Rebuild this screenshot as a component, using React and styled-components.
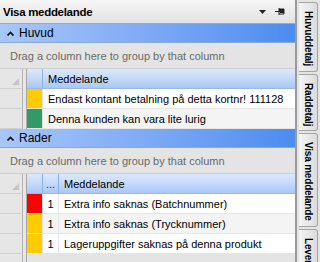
import React from 'react';
import styled, { createGlobalStyle } from 'styled-components';

const GlobalStyle = createGlobalStyle`
  html, body { margin: 0; padding: 0; background: #e4e4e4; }
  body { font-family: "Liberation Sans", Arial, sans-serif; }
`;

const huvudRows = [
  { color: '#ffcc00', text: 'Endast kontant betalning på detta kortnr! 111128' },
  { color: '#339966', text: 'Denna kunden kan vara lite lurig' },
];

const raderRows = [
  { color: '#ff0000', n: '1', text: 'Extra info saknas (Batchnummer)' },
  { color: '#ffcc00', n: '1', text: 'Extra info saknas (Trycknummer)' },
  { color: '#ffcc00', n: '1', text: 'Lageruppgifter saknas på denna produkt' },
];

const tabs = [
  { label: 'Huvuddetalj', h: 70 },
  { label: 'Raddetalj', h: 57 },
  { label: 'Visa meddelande', h: 94 },
  { label: 'Leverans', h: 80 },
];

const App = () => (
  <Shell>
    <GlobalStyle />
    <Panel>
      <TitleBar>
        <Title>Visa meddelande</Title>
        <TitleIcons>
          <svg width="7" height="4" viewBox="0 0 7 4"><path d="M0 0h7L3.5 4z" fill="#222" /></svg>
          <svg width="11" height="9" viewBox="0 0 11 9">
            <path d="M0 4.5h4M4 1v7M4 2h5v5H4M5 5.5h4" stroke="#222" strokeWidth="1" fill="none" />
            <rect x="4" y="2" width="5" height="3" fill="#222" />
          </svg>
        </TitleIcons>
      </TitleBar>

      <Band>
        <Chevron viewBox="0 0 7 5"><path d="M0.5 4.5L3.5 1.5L6.5 4.5" stroke="#111" strokeWidth="1.6" fill="none" /></Chevron>
        Huvud
      </Band>
      <DropArea>Drag a column here to group by that column</DropArea>
      <Row $header>
        <Indicator $header><Corner /></Indicator>
        <Gap />
        <ColorCell $header />
        <HeadCell>Meddelande</HeadCell>
      </Row>
      {huvudRows.map((r, i) => (
        <Row key={i} $alt={i % 2 === 1}>
          <Indicator />
          <Gap />
          <ColorCell style={{ background: r.color }} />
          <TextCell>{r.text}</TextCell>
        </Row>
      ))}

      <Band>
        <Chevron viewBox="0 0 7 5"><path d="M0.5 4.5L3.5 1.5L6.5 4.5" stroke="#111" strokeWidth="1.6" fill="none" /></Chevron>
        Rader
      </Band>
      <DropArea>Drag a column here to group by that column</DropArea>
      <Row $header>
        <Indicator $header><Corner /></Indicator>
        <Gap />
        <ColorCell $header />
        <NumCell $header>...</NumCell>
        <HeadCell>Meddelande</HeadCell>
      </Row>
      {raderRows.map((r, i) => (
        <Row key={i} $alt={i % 2 === 1}>
          <Indicator />
          <Gap />
          <ColorCell style={{ background: r.color }} />
          <NumCell>{r.n}</NumCell>
          <TextCell>{r.text}</TextCell>
        </Row>
      ))}
      <Filler>
        <Indicator $fill />
        <Gap />
      </Filler>
    </Panel>

    <TabStrip>
      {tabs.map((t) => (
        <Tab key={t.label} $h={t.h}>{t.label}</Tab>
      ))}
    </TabStrip>
  </Shell>
);

export default App;

const Shell = styled.div`
  width: 320px;
  height: 262px;
  display: flex;
  overflow: hidden;
  background: #e4e4e4;
`;

const Panel = styled.div`
  width: 295px;
  display: flex;
  flex-direction: column;
  border-right: 2px solid #9a9a9a;
  overflow: hidden;
`;

const TitleBar = styled.div`
  height: 23px;
  flex: none;
  display: flex;
  align-items: center;
  justify-content: space-between;
  padding: 0 9px 0 3px;
  background: linear-gradient(#f6f6f6, #e2e2e2);
  border-bottom: 1px solid #a8a8a8;
`;

const Title = styled.span`
  font-weight: bold;
  font-size: 11.5px;
  letter-spacing: -0.3px;
  color: #000;
`;

const TitleIcons = styled.div`
  display: flex;
  align-items: center;
  gap: 9px;
`;

const Band = styled.div`
  height: 18px;
  flex: none;
  display: flex;
  align-items: center;
  gap: 5px;
  padding-left: 7px;
  font-size: 12px;
  color: #000;
  background: linear-gradient(to right, #a7c7f7, #7eaaf5 50%, #4b8cf0);
  border-bottom: 1px solid #8aa8d8;
`;

const Chevron = styled.svg`
  width: 7px;
  height: 5px;
`;

const DropArea = styled.div`
  height: 25px;
  flex: none;
  display: flex;
  align-items: center;
  padding-left: 10px;
  font-size: 11px;
  color: #6a6a6a;
  background: #e4e4e4;
  border-bottom: 1px solid #cfcfcf;
`;

const Row = styled.div`
  height: 20px;
  flex: none;
  display: flex;
  align-items: stretch;
  background: ${(p) => (p.$header ? 'linear-gradient(#dbe8fc, #c5dafa 50%, #a9c7f6)' : p.$alt ? '#f4f4f4' : '#ffffff')};
  border-bottom: 1px solid ${(p) => (p.$header ? '#9cb8e4' : '#e6e6e6')};
  box-sizing: border-box;
`;

const Indicator = styled.div`
  position: relative;
  width: 22px;
  flex: none;
  background: #e6e6e6;
  border-right: 1px solid #b4b4b4;
  border-bottom: ${(p) => (p.$fill ? 'none' : '1px solid #d0d0d0')};
  margin-bottom: -1px;
`;

const Corner = styled.span`
  position: absolute;
  right: 3px;
  bottom: 3px;
  width: 0;
  height: 0;
  border-left: 7px solid transparent;
  border-bottom: 7px solid #c4c4c4;
`;

const Gap = styled.div`
  width: 3px;
  flex: none;
  background: #e6e6e6;
  border-right: 1px solid #a8a8a8;
  margin-bottom: -1px;
`;

const ColorCell = styled.div`
  width: 15px;
  flex: none;
  background: ${(p) => (p.$header ? 'transparent' : '#fff')};
  border-right: 1px solid ${(p) => (p.$header ? '#8fb0e0' : '#e0e0e0')};
`;

const NumCell = styled.div`
  width: 15px;
  flex: none;
  display: flex;
  align-items: center;
  justify-content: center;
  font-size: 11px;
  color: ${(p) => (p.$header ? '#333' : '#000')};
  border-right: 1px solid ${(p) => (p.$header ? '#8fb0e0' : '#e6e6e6')};
`;

const HeadCell = styled.div`
  flex: 1;
  display: flex;
  align-items: center;
  padding-left: 5px;
  font-size: 11px;
  white-space: nowrap;
  color: #000;
`;

const TextCell = styled(HeadCell)`
  padding-left: 5px;
`;

const Filler = styled.div`
  flex: 1;
  display: flex;
`;

const TabStrip = styled.div`
  flex: 1;
  display: flex;
  flex-direction: column;
  gap: 2px;
  padding: 2px 2px 0 2px;
  background: #e4e4e4;
`;

const Tab = styled.div`
  height: ${(p) => p.$h}px;
  flex: none;
  writing-mode: vertical-rl;
  display: flex;
  align-items: center;
  justify-content: flex-start;
  padding-top: 8px;
  font-weight: bold;
  font-size: 10px;
  letter-spacing: -0.2px;
  white-space: nowrap;
  color: #000;
  background: linear-gradient(to right, #f4f4f4, #dcdcdc);
  border: 1px solid #a4a4a4;
  border-left: none;
  border-radius: 0 3px 3px 0;
  box-sizing: border-box;
  padding-left: 1px;
`;
